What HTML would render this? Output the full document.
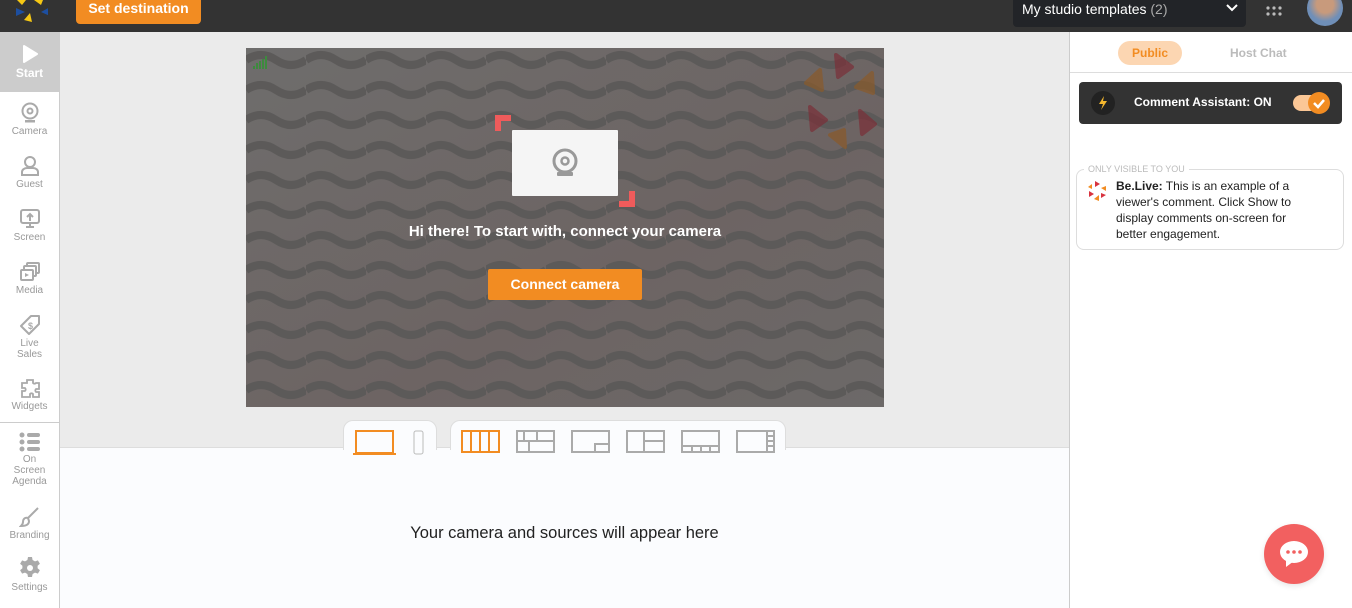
<!DOCTYPE html>
<html><head><meta charset="utf-8"><style>
*{box-sizing:border-box;margin:0;padding:0}
body{width:1352px;height:608px;overflow:hidden;font-family:"Liberation Sans",sans-serif;background:#ebebeb;position:relative}
.top{position:absolute;left:0;top:0;width:1352px;height:32px;background:#333}
.btn{position:absolute;left:76px;top:0;width:125px;height:24px;background:#f28c22;border-radius:0 0 4px 4px;color:#fff;font-weight:bold;font-size:14px;text-align:center;line-height:17px}
.sel{position:absolute;left:1013px;top:0;width:233px;height:27px;background:#222428;border-radius:0 0 4px 4px;color:#fff;font-size:14px;padding:0 9px;line-height:18px}
.side{position:absolute;left:0;top:32px;width:60px;height:576px;background:#fff;border-right:1px solid #ccc}
.it{position:absolute;left:0;width:59px;text-align:center;color:#999;font-size:10px;line-height:11px}
.it svg{display:block;margin:0 auto 2px}
.right{position:absolute;left:1069px;top:32px;width:283px;height:576px;background:#fff;border-left:1px solid #ccc}
.bottom{position:absolute;left:60px;top:447px;width:1009px;height:161px;background:#fbfcfe;border-top:1px solid #ddd}
.tab{position:absolute;top:420px;height:30px;background:#fbfcfe;border:1px solid #ddd;border-bottom:none;border-radius:10px 10px 0 0}
</style></head><body>
<div class="top"></div>
<svg style="position:absolute;left:14px;top:0" width="34" height="24" viewBox="0 0 34 24"><polygon points="3,0 12,0 8,5" fill="#f6c814"/><polygon points="20,0 29,0 27,5" fill="#f6c814"/><polygon points="2,8 11,12 2,16" fill="#1d4fa0"/><polygon points="36,7 27,12 36,16" fill="#1d4fa0"/><polygon points="10,20 16,13 18,22" fill="#f6c814"/></svg>
<div class="btn">Set destination</div>
<div class="sel">My studio templates <span style="color:#aaa">(2)</span><svg style="position:absolute;right:8px;top:4px" width="12" height="8"><path d="M1 1l5 5 5-5" stroke="#fff" stroke-width="2" fill="none"/></svg></div>
<svg style="position:absolute;left:1266px;top:6px" width="16" height="12"><g fill="#bbb"><circle cx="2" cy="2" r="1.6"/><circle cx="8" cy="2" r="1.6"/><circle cx="14" cy="2" r="1.6"/><circle cx="2" cy="8" r="1.6"/><circle cx="8" cy="8" r="1.6"/><circle cx="14" cy="8" r="1.6"/></g></svg>
<div style="position:absolute;left:1307px;top:-10px;width:36px;height:36px;border-radius:50%;background:radial-gradient(circle at 50% 40%,#c89a7c 30%,#6f8fb8 60%)"></div>

<div class="side">
<div style="position:absolute;left:0;top:0;width:59px;height:60px;background:#ccc;text-align:center;color:#fff;font-weight:bold;font-size:12px"><svg style="display:block;margin:13px auto 3px" width="16" height="18"><polygon points="2,1 15,9 2,17" fill="#fff" stroke="#fff" stroke-linejoin="round" stroke-width="2"/></svg>Start</div>
<div class="it" style="top:70px"><svg width="20" height="22"><circle cx="10" cy="9" r="7.5" fill="none" stroke="#aaa" stroke-width="2"/><circle cx="10" cy="9" r="2.5" fill="none" stroke="#aaa" stroke-width="2"/><rect x="5" y="18" width="10" height="2.5" fill="#aaa"/></svg>Camera</div>
<div class="it" style="top:123px"><svg width="20" height="22"><circle cx="10" cy="7" r="5" fill="none" stroke="#aaa" stroke-width="2"/><path d="M2 20v-3a5 4 0 0 1 5-4h6a5 4 0 0 1 5 4v3z" fill="none" stroke="#aaa" stroke-width="2"/></svg>Guest</div>
<div class="it" style="top:176px"><svg width="20" height="22"><rect x="1" y="2" width="18" height="13" rx="2" fill="none" stroke="#aaa" stroke-width="2"/><path d="M10 13V6M7 9l3-3 3 3M6 19h8M10 15v4" stroke="#aaa" stroke-width="2" fill="none"/></svg>Screen</div>
<div class="it" style="top:229px"><svg width="22" height="22"><rect x="8" y="2" width="12" height="10" rx="1" fill="none" stroke="#aaa" stroke-width="2"/><rect x="5" y="5" width="12" height="10" rx="1" fill="#fff" stroke="#aaa" stroke-width="2"/><rect x="2" y="9" width="12" height="10" rx="1" fill="#fff" stroke="#aaa" stroke-width="2"/><polygon points="6,12 10,14 6,16" fill="#aaa"/></svg>Media</div>
<div class="it" style="top:282px"><svg width="22" height="22"><path d="M12 2h8v8L10 20 2 12z" fill="none" stroke="#aaa" stroke-width="2" stroke-linejoin="round"/><text x="9" y="15" font-size="9" fill="#aaa" font-weight="bold">$</text></svg>Live<br>Sales</div>
<div class="it" style="top:345px"><svg width="22" height="22"><path d="M8 3h6v3a2 2 0 0 0 3 0h3v6h-3a2 2 0 0 0 0 3h3v5h-6v-3a2 2 0 0 0-3 0v3H3v-6h3a2 2 0 0 0 0-3H3V6h5z" fill="none" stroke="#aaa" stroke-width="1.8"/></svg>Widgets</div>
<div style="position:absolute;left:0;top:390px;width:59px;border-top:1px solid #ccc"></div>
<div class="it" style="top:400px"><svg width="22" height="20"><g fill="#aaa"><circle cx="3" cy="3" r="2.5"/><circle cx="3" cy="10" r="2.5"/><circle cx="3" cy="17" r="2.5"/><rect x="8" y="1" width="13" height="4" rx="2"/><rect x="8" y="8" width="13" height="4" rx="2"/><rect x="8" y="15" width="13" height="4" rx="2"/></g></svg>On<br>Screen<br>Agenda</div>
<div class="it" style="top:474px"><svg width="22" height="22"><path d="M19 2L9 12M9 12c-3-1-5 1-5 4 0 2-1 3-2 4 4 0 8-1 8-5z" fill="none" stroke="#aaa" stroke-width="2"/></svg>Branding</div>
<div class="it" style="top:524px"><svg width="24" height="24" viewBox="0 0 24 24"><path d="M10 1h4l.6 3 2.4 1.4 2.9-1 2 3.4-2.3 2v2.4l2.3 2-2 3.4-2.9-1-2.4 1.4-.6 3h-4l-.6-3-2.4-1.4-2.9 1-2-3.4 2.3-2v-2.4l-2.3-2 2-3.4 2.9 1L9.4 4z" fill="#aaa"/><circle cx="12" cy="12" r="3" fill="#fff"/></svg>Settings</div>
</div>

<svg style="position:absolute;left:246px;top:48px" width="638" height="359">
<defs><pattern id="w" width="60" height="30" patternUnits="userSpaceOnUse"><path d="M0 12 Q15 2 30 12 T60 12" stroke="#5c5a59" stroke-width="8" fill="none"/></pattern>
<linearGradient id="g" x1="0" y1="0" x2="1" y2="1"><stop offset="0" stop-color="#6e6d6c"/><stop offset=".6" stop-color="#6d6463"/><stop offset="1" stop-color="#6c6968"/></linearGradient></defs>
<rect width="638" height="359" fill="url(#g)"/><rect width="638" height="359" fill="url(#w)"/>
<g fill="#3d8a3e"><rect x="7" y="18" width="2" height="3"/><rect x="10" y="15" width="2" height="6"/><rect x="13" y="13" width="2" height="8"/><rect x="16" y="11" width="2" height="10"/><rect x="19" y="8" width="2" height="13"/></g>
<g opacity=".7" stroke-linejoin="round" stroke-width="4"><polygon points="590,7 606,19 592,29" fill="#7a2f38" stroke="#7a2f38"/><polygon points="574,22 576,42 560,35" fill="#8a5a2a" stroke="#8a5a2a"/><polygon points="626,25 627,45 610,39" fill="#8a5a2a" stroke="#8a5a2a"/><polygon points="564,59 580,72 566,82" fill="#7a2f38" stroke="#7a2f38"/><polygon points="614,63 629,76 616,86" fill="#7a2f38" stroke="#7a2f38"/><polygon points="584,87 598,82 599,99" fill="#8a5a2a" stroke="#8a5a2a"/></g>
<path d="M252 83v-13h13" stroke="#ef5b5b" stroke-width="6" fill="none"/>
<path d="M386 143v13h-13" stroke="#ef5b5b" stroke-width="6" fill="none"/>
<rect x="266" y="82" width="106" height="66" fill="#f5f5f5" rx="1"/>
<circle cx="319" cy="113" r="11" fill="none" stroke="#999" stroke-width="3"/><circle cx="319" cy="113" r="3.5" fill="none" stroke="#999" stroke-width="2.5"/><rect x="311" y="124" width="16" height="4" rx="1" fill="#999"/>
<text x="319" y="188" text-anchor="middle" font-size="15" font-weight="bold" fill="#fff" font-family="Liberation Sans">Hi there! To start with, connect your camera</text>
<rect x="242" y="221" width="154" height="31" rx="2" fill="#f28c22"/>
<text x="319" y="241" text-anchor="middle" font-size="14" font-weight="bold" fill="#fff" font-family="Liberation Sans">Connect camera</text>
</svg>

<div class="bottom"><div style="position:absolute;left:0;width:1009px;top:76px;text-align:center;font-size:16.5px;color:#222">Your camera and sources will appear here</div></div>
<div class="tab" style="left:343px;width:94px"></div>
<div class="tab" style="left:450px;width:336px"></div>
<svg style="position:absolute;left:343px;top:425px" width="450" height="32" fill="none" stroke-width="2">
<rect x="13" y="6" width="37" height="22" stroke="#f28c22"/><path d="M10 29h43" stroke="#f28c22"/>
<rect x="71" y="6" width="9" height="23" rx="2" stroke="#bbb" stroke-width="1"/>
<rect x="119" y="6" width="37" height="21" stroke="#f28c22"/><path d="M128 6v21M137 6v21M146 6v21" stroke="#f28c22"/>
<g stroke="#aaa"><rect x="174" y="6" width="37" height="21"/><path d="M174 16h37M181 6v10M194 6v10M186 16v11"/>
<rect x="229" y="6" width="37" height="21"/><path d="M252 27v-8h14"/>
<rect x="284" y="6" width="37" height="21"/><path d="M301 6v21M301 16h20"/>
<rect x="339" y="6" width="37" height="21"/><path d="M339 21h37M349 21v6M358 21v6M367 21v6"/>
<rect x="394" y="6" width="37" height="21"/><path d="M424 6v21M424 11h7M424 16h7M424 21h7"/></g>
</svg>

<div class="right">
<div style="position:absolute;left:48px;top:9px;width:64px;height:24px;border-radius:12px;background:#fcd6b2;color:#f28c22;font-weight:bold;font-size:12px;text-align:center;line-height:24px">Public</div>
<div style="position:absolute;left:160px;top:9px;font-weight:bold;font-size:12px;color:#bbb;line-height:24px">Host Chat</div>
<div style="position:absolute;left:0;top:40px;width:283px;border-top:1px solid #ddd"></div>
<div style="position:absolute;left:9px;top:50px;width:263px;height:42px;background:#333;border-radius:4px">
<div style="position:absolute;left:12px;top:9px;width:24px;height:24px;border-radius:50%;background:#222"><svg width="24" height="24"><polygon points="13,5 8,13 12,13 10,19 16,10 12,10" fill="#f5b82e"/></svg></div>
<div style="position:absolute;left:55px;top:13px;color:#fff;font-weight:bold;font-size:12px">Comment Assistant: ON</div>
<div style="position:absolute;left:214px;top:13px;width:34px;height:16px;border-radius:8px;background:#fbc796"></div>
<div style="position:absolute;left:229px;top:10px;width:22px;height:22px;border-radius:50%;background:#f28c22"><svg width="22" height="22"><path d="M6 11l4 4 6-7" stroke="#fff" stroke-width="2.5" fill="none"/></svg></div>
</div>
<div style="position:absolute;left:6px;top:137px;width:268px;height:81px;border:1px solid #ddd;border-radius:8px"></div>
<div style="position:absolute;left:14px;top:132px;background:#fff;padding:0 4px;font-size:9px;color:#bbb">ONLY VISIBLE TO YOU</div>
<svg style="position:absolute;left:17px;top:148px" width="20" height="22"><g><polygon points="8,1 13,4 8,7" fill="#d8333f"/><polygon points="1,7 5,4 5,9" fill="#f28c22"/><polygon points="19,6 14,8 19,11" fill="#f28c22"/><polygon points="2,11 7,14 2,17" fill="#d8333f"/><polygon points="14,13 19,15 14,18" fill="#d8333f"/><polygon points="7,19 12,15 12,21" fill="#f28c22"/></g></svg>
<div style="position:absolute;left:46px;top:146px;width:196px;font-size:12px;line-height:16px;color:#222"><b>Be.Live:</b> This is an example of a viewer's comment. Click Show to display comments on-screen for better engagement.</div>
</div>
<div style="position:absolute;left:1264px;top:524px;width:60px;height:60px;border-radius:50%;background:#f26060;box-shadow:0 2px 6px rgba(0,0,0,.1)"><svg width="60" height="60"><ellipse cx="30" cy="28" rx="14" ry="11" fill="#fff"/><polygon points="22,34 22,43 30,37" fill="#fff"/><g fill="#f26060"><circle cx="24" cy="28" r="1.8"/><circle cx="30" cy="28" r="1.8"/><circle cx="36" cy="28" r="1.8"/></g></svg></div>
</body></html>
